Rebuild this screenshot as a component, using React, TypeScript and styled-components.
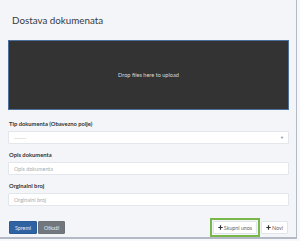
import styled, { createGlobalStyle } from 'styled-components';

const Global = createGlobalStyle`
  * { box-sizing: border-box; }
  html, body { margin: 0; padding: 0; background: #f7f8fb; }
  body { font-family: Lato, "Open Sans", sans-serif; color: #333; }
`;

const Panel = styled.div`
  width: 297px;
  height: 239px;
  background: #f3f5f9;
  border-right: 1px solid #b3bac6;
  border-bottom: 2px solid #b3bac6;
  padding: 0 7px 0 8px;
  display: flex;
  flex-direction: column;
`;

const Title = styled.h1`
  margin: 0;
  height: 40px;
  padding-left: 4px;
  display: flex;
  align-items: center;
  font-size: 9.8px;
  font-weight: 400;
  color: #3a3a3a;
`;

const DropZone = styled.div`
  height: 71px;
  background: #333333;
  border: 1px solid #4d6f9c;
  display: flex;
  align-items: center;
  justify-content: center;
  font-size: 5.6px;
  color: #d8d8d8;
`;

const Field = styled.div<{ $top: number }>`
  margin-top: ${p => p.$top}px;
  display: flex;
  flex-direction: column;
`;

const Label = styled.label`
  height: 8px;
  line-height: 8px;
  padding-left: 1px;
  margin-bottom: 3px;
  font-size: 5.8px;
  font-weight: 700;
  color: #333;
`;

const Control = styled.div`
  height: 13px;
  background: #fff;
  border: 1px solid #e3e6eb;
  border-radius: 1px;
  display: flex;
  align-items: center;
  justify-content: space-between;
  padding: 0 4px 0 5px;
  font-size: 5.4px;
  color: #a9acb1;
`;

const Chevron = styled.span`
  font-size: 4px;
  color: #888;
`;

const Actions = styled.div`
  margin-top: 12px;
  display: flex;
  align-items: center;
  justify-content: space-between;
  padding-left: 1px;
  padding-right: 1px;
`;

const Group = styled.div`
  display: flex;
  align-items: center;
  gap: 1px;
`;

const Button = styled.button<{ $variant: 'primary' | 'secondary' | 'light' }>`
  height: 13px;
  padding: 0 ${p => (p.$variant === 'light' ? 4 : 5)}px;
  border: 1px solid ${p => (p.$variant === 'primary' ? '#2a5b97' : p.$variant === 'secondary' ? '#6c7278' : '#e1e4e8')};
  background: ${p => (p.$variant === 'primary' ? '#2f62a1' : p.$variant === 'secondary' ? '#71777d' : '#fff')};
  color: ${p => (p.$variant === 'light' ? '#666' : '#e8ecf2')};
  font-family: Lato, sans-serif;
  font-size: 5.3px;
  display: flex;
  align-items: center;
  gap: 1px;
  border-radius: 1px;
`;

const Highlight = styled.div`
  border: 2px solid #79b74a;
  padding: 1px;
`;

const PlusIcon = () => (
  <svg width="5" height="5" viewBox="0 0 5 5">
    <path d="M2.5 0.3v4.4M0.3 2.5h4.4" stroke="#333" strokeWidth="1.2" />
  </svg>
);

export default function App() {
  return (
    <>
      <Global />
      <Panel>
        <Title>Dostava dokumenata</Title>
        <DropZone>Drop files here to upload</DropZone>
        <Field $top={10}>
          <Label>Tip dokumenta (Obavezno polje)</Label>
          <Control>
            <span>------</span>
            <Chevron>▼</Chevron>
          </Control>
        </Field>
        <Field $top={7}>
          <Label>Opis dokumenta</Label>
          <Control>Opis dokumenta</Control>
        </Field>
        <Field $top={7}>
          <Label>Orginalni broj</Label>
          <Control>Orginalni broj</Control>
        </Field>
        <Actions>
          <Group>
            <Button $variant="primary">Spremi</Button>
            <Button $variant="secondary">Otkaži</Button>
          </Group>
          <Group>
            <Highlight>
              <Button $variant="light"><PlusIcon />Skupni unos</Button>
            </Highlight>
            <Button $variant="light"><PlusIcon />Novi</Button>
          </Group>
        </Actions>
      </Panel>
    </>
  );
}
